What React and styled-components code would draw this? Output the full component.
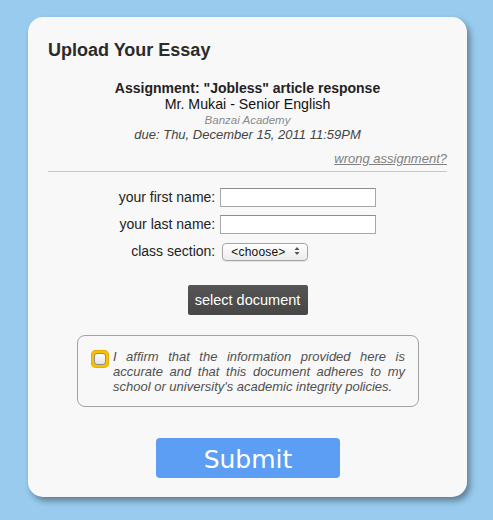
import React from "react";
import styled, { createGlobalStyle } from "styled-components";

const Global = createGlobalStyle`
  html, body { margin: 0; padding: 0; background: #98cbee; }
  body { font-family: "Liberation Sans", Arial, sans-serif; }
  * { box-sizing: border-box; }
`;

const Page = styled.div`
  padding-top: 17px;
  height: 520px;
`;

const Card = styled.div`
  width: 439px;
  height: 480px;
  margin: 0 0 0 28px;
  background: #f8f8f8;
  border-radius: 15px;
  box-shadow: 3px 4px 6px rgba(0, 0, 0, 0.38);
  padding: 22px 20px 19px 20px;
  display: flex;
  flex-direction: column;
`;

const Title = styled.h1`
  margin: 0;
  font-size: 18px;
  line-height: 22px;
  font-weight: bold;
  color: #2b2b2b;
`;

const Info = styled.div`
  margin-top: 20px;
  display: flex;
  flex-direction: column;
  align-items: center;
  text-align: center;
`;

const InfoLine = styled.div`
  font-size: ${(p) => p.$size}px;
  line-height: ${(p) => p.$lh}px;
  font-weight: ${(p) => (p.$bold ? "bold" : "normal")};
  font-style: ${(p) => (p.$italic ? "italic" : "normal")};
  color: ${(p) => p.$color};
  white-space: nowrap;
`;

const WrongLink = styled.a`
  align-self: flex-end;
  margin-top: 10px;
  font-size: 13px;
  line-height: 14px;
  font-style: italic;
  color: #808080;
  text-decoration: underline;
  cursor: pointer;
`;

const Rule = styled.hr`
  margin: 5px 0 0 0;
  border: none;
  border-top: 1px solid #c9c9c9;
  height: 0;
`;

const Form = styled.div`
  margin-top: 16px;
  display: grid;
  grid-template-columns: auto auto;
  grid-template-rows: 19px 19px 18px;
  row-gap: 8px;
  column-gap: 5px;
  justify-content: center;
  align-items: center;
`;

const Label = styled.label`
  justify-self: end;
  font-size: 14px;
  line-height: 19px;
  color: #222;
  white-space: nowrap;
`;

const TextInput = styled.input`
  width: 156px;
  height: 19px;
  margin: 0;
  border: 1px solid #a8a8a8;
  border-top-color: #8c8c8c;
  background: #fff;
  font-family: "Liberation Sans", Arial, sans-serif;
  font-size: 12px;
  padding: 1px 3px;
  outline: none;
`;

const SelectWrap = styled.div`
  position: relative;
  width: 86px;
  height: 18px;
  margin-left: 2px;
`;

const Select = styled.select`
  appearance: none;
  -webkit-appearance: none;
  width: 86px;
  height: 18px;
  margin: 0;
  border: 1px solid #a5a5a5;
  border-radius: 4px;
  background: linear-gradient(#ffffff, #ececec);
  box-shadow: 0 1px 1px rgba(0, 0, 0, 0.08);
  font-family: "Liberation Sans", Arial, sans-serif;
  font-size: 12px;
  letter-spacing: 0.2px;
  color: #111;
  padding: 0 0 0 8px;
  line-height: 16px;
  outline: none;
`;

const Arrows = styled.svg`
  position: absolute;
  right: 8px;
  top: 4px;
  pointer-events: none;
`;

const DocButton = styled.button`
  align-self: center;
  margin-top: 25px;
  width: 120px;
  height: 30px;
  border: none;
  border-radius: 2px;
  background: linear-gradient(#555555, #474747);
  color: #fff;
  font-family: "Liberation Sans", Arial, sans-serif;
  font-size: 14.5px;
  padding: 0;
  cursor: pointer;
`;

const AffirmBox = styled.div`
  align-self: center;
  margin: 20px 0 0 1px;
  width: 342px;
  border: 1px solid #a3a3a3;
  border-radius: 8px;
  padding: 13px 13px 12px 13px;
  display: flex;
  align-items: flex-start;
  gap: 4px;
`;

const CheckRing = styled.span`
  flex: none;
  margin-top: 1px;
  width: 18px;
  height: 18px;
  border-radius: 5px;
  background: #f6c200;
  box-shadow: inset 0 0 0 1px #e9ad00;
  display: flex;
  align-items: center;
  justify-content: center;
`;

const CheckBox = styled.span`
  width: 12px;
  height: 12px;
  border-radius: 3px;
  border: 1px solid #8e8e8e;
  background: linear-gradient(#ffffff, #e2e2e2);
`;

const AffirmText = styled.p`
  margin: 0;
  flex: 1;
  font-size: 13px;
  line-height: 15px;
  font-style: italic;
  color: #505050;
  text-align: justify;
`;

const SubmitButton = styled.button`
  align-self: center;
  margin: 31px 0 0 1px;
  width: 184px;
  height: 40px;
  border: none;
  border-radius: 4px;
  background: #5b9ef3;
  color: #fff;
  font-family: "DejaVu Sans", Verdana, sans-serif;
  font-size: 25px;
  padding: 2px 0 0 0;
  cursor: pointer;
`;

export default function App() {
  return (
    <>
      <Global />
      <Page>
        <Card>
          <Title>Upload Your Essay</Title>
          <Info>
            <InfoLine $size={14} $lh={15} $bold $color="#222">
              Assignment: "Jobless" article response
            </InfoLine>
            <InfoLine $size={14.2} $lh={17} $color="#111">
              Mr. Mukai - Senior English
            </InfoLine>
            <InfoLine $size={11.5} $lh={14} $italic $color="#8a8a8a">
              Banzai Academy
            </InfoLine>
            <InfoLine $size={13} $lh={15} $italic $color="#444">
              due: Thu, December 15, 2011 11:59PM
            </InfoLine>
          </Info>
          <WrongLink>wrong assignment?</WrongLink>
          <Rule />
          <Form>
            <Label htmlFor="fn">your first name:</Label>
            <TextInput id="fn" type="text" />
            <Label htmlFor="ln">your last name:</Label>
            <TextInput id="ln" type="text" />
            <Label htmlFor="cs">class section:</Label>
            <SelectWrap>
              <Select id="cs" defaultValue="">
                <option value="">&lt;choose&gt;</option>
              </Select>
              <Arrows width="6" height="10" viewBox="0 0 6 10">
                <path d="M3 1 L5.5 4 L0.5 4 Z" fill="#555" />
                <path d="M3 9 L5.5 6 L0.5 6 Z" fill="#555" />
              </Arrows>
            </SelectWrap>
          </Form>
          <DocButton>select document</DocButton>
          <AffirmBox>
            <CheckRing>
              <CheckBox />
            </CheckRing>
            <AffirmText>
              I affirm that the information provided here is accurate and that
              this document adheres to my school or university's academic
              integrity policies.
            </AffirmText>
          </AffirmBox>
          <SubmitButton>Submit</SubmitButton>
        </Card>
      </Page>
    </>
  );
}
